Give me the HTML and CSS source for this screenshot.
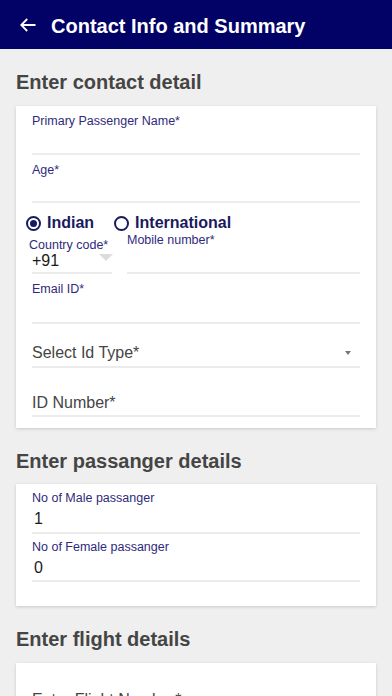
FILE: index.html
```
<!DOCTYPE html>
<html lang="en">
<head>
<meta charset="utf-8">
<title>Contact Info and Summary</title>
<link rel="stylesheet" href="styles.css">
</head>
<body>
<header class="appbar">
  <svg class="back" width="16" height="14" viewBox="0 0 16 14"><path d="M1.2 7 H15.5 M7.2 1 L1.2 7 L7.2 13" fill="none" stroke="#fff" stroke-width="1.8"/></svg>
  <h1 class="title">Contact Info and Summary</h1>
</header>
<main class="content">
  <h2 class="section">Enter contact detail</h2>
  <div class="card card-contact">
    <div class="field f-name"><div class="label">Primary Passenger Name*</div><div class="input h25"></div></div>
    <div class="field f-age"><div class="label">Age*</div><div class="input h24"></div></div>
    <div class="radios">
      <span class="radio on"></span><span class="rlabel">Indian</span>
      <span class="radio"></span><span class="rlabel">International</span>
    </div>
    <div class="phone">
      <div class="field cc">
        <div class="label shift">Country code*</div>
        <div class="value cc-val"><span>+91</span><span class="tri"></span></div>
      </div>
      <div class="field mobile"><div class="label">Mobile number*</div><div class="input h25"></div></div>
    </div>
    <div class="field f-email"><div class="label">Email ID*</div><div class="input h25"></div></div>
    <div class="field f-select"><div class="placeholder sel"><span>Select Id Type*</span><span class="caret"></span></div></div>
    <div class="field f-idnum"><div class="placeholder">ID Number*</div></div>
  </div>

  <h2 class="section">Enter passanger details</h2>
  <div class="card card-pass">
    <div class="field f-male"><div class="label">No of Male passanger</div><div class="value num">1</div></div>
    <div class="field f-female"><div class="label">No of Female passanger</div><div class="value num">0</div></div>
  </div>

  <h2 class="section">Enter flight details</h2>
  <div class="card card-flight">
    <div class="field f-flight"><div class="placeholder">Enter Flight Number*</div></div>
    <div class="field f-flight2"><div class="placeholder">Enter Flight Date*</div></div>
  </div>
</main>
</body>
</html>
```
FILE: styles.css
```
html, body {
  margin: 0;
  padding: 0;
}
body {
  background: #efefef;
  font-family: "Liberation Sans", Arial, sans-serif;
  color: #222;
  width: 392px;
  height: 696px;
  overflow: hidden;
}
.appbar {
  box-sizing: border-box;
  height: 49px;
  background: #020266;
  display: flex;
  align-items: flex-start;
  padding: 15px 0 0 20px;
}
.back {
  margin-top: 3px;
  flex: none;
}
.title {
  margin: 0 0 0 15px;
  font-size: 20px;
  line-height: 22px;
  font-weight: bold;
  color: #fff;
}
.content {
  padding: 0 16px;
}
.section {
  margin: 22px 0 12.5px;
  font-size: 20px;
  line-height: 22px;
  font-weight: bold;
  color: #454545;
}
.card {
  background: #fff;
  box-shadow: 0 1px 3px rgba(0, 0, 0, 0.16);
  padding: 0 16px;
}
.card-contact {
  padding-top: 8.7px;
  padding-bottom: 11px;
}
.field {
  border-bottom: 2px solid #ececec;
}
.label {
  font-size: 12.5px;
  line-height: 14px;
  color: #2f2a7c;
}
.label.shift {
  margin-left: -3px;
}
.h24 { height: 24.2px; }
.h25 { height: 25px; }
.f-age { margin-top: 8px; }
.radios {
  display: flex;
  align-items: center;
  margin: 10px 0 0 -6px;
  height: 20px;
}
.radio {
  box-sizing: border-box;
  width: 15px;
  height: 15px;
  border: 2px solid #1a1a5e;
  border-radius: 50%;
  display: flex;
  align-items: center;
  justify-content: center;
  margin-top: 1px;
}
.radio.on::after {
  content: "";
  width: 7px;
  height: 7px;
  border-radius: 50%;
  background: #1a1a5e;
}
.rlabel {
  font-size: 16px;
  line-height: 20px;
  font-weight: bold;
  color: #1a1a5e;
  margin-left: 6px;
  margin-right: 20px;
}
.phone {
  display: flex;
  align-items: flex-start;
}
.cc {
  width: 80px;
  margin-top: 4.5px;
  flex: none;
}
.value {
  font-size: 16px;
  line-height: 18px;
  color: #1b1b1b;
}
.cc-val {
  display: flex;
  align-items: center;
  justify-content: space-between;
  padding-bottom: 1.7px;
}
.tri {
  width: 0;
  height: 0;
  border-left: 7.5px solid transparent;
  border-right: 7.5px solid transparent;
  border-top: 7px solid #dcdcdc;
  margin-right: -1px;
  margin-top: -6px;
}
.mobile {
  flex: 1;
  margin-left: 15px;
}
.f-email { margin-top: 8px; }
.f-email .h25 { height: 25.3px; }
.placeholder {
  font-size: 16px;
  line-height: 18px;
  color: #454545;
}
.f-select {
  padding-top: 20.5px;
}
.sel {
  display: flex;
  align-items: center;
  justify-content: space-between;
  padding-bottom: 3.5px;
}
.caret {
  width: 0;
  height: 0;
  border-left: 3.5px solid transparent;
  border-right: 3.5px solid transparent;
  border-top: 4.5px solid #777;
  margin-right: 9px;
}
.f-idnum {
  padding-top: 26px;
}
.f-idnum .placeholder { padding-bottom: 3px; }
.card-pass {
  padding-top: 6.7px;
  padding-bottom: 24px;
}
.num {
  margin-top: 4.8px;
  padding: 0 0 3.5px 2px;
}
.f-male .num { padding-bottom: 4.5px; }
.f-female { margin-top: 5.7px; }
.card-flight {
  padding-top: 28px;
  padding-bottom: 20px;
}
.f-flight .placeholder { padding-bottom: 3px; }
.f-flight2 { margin-top: 26px; }
```
